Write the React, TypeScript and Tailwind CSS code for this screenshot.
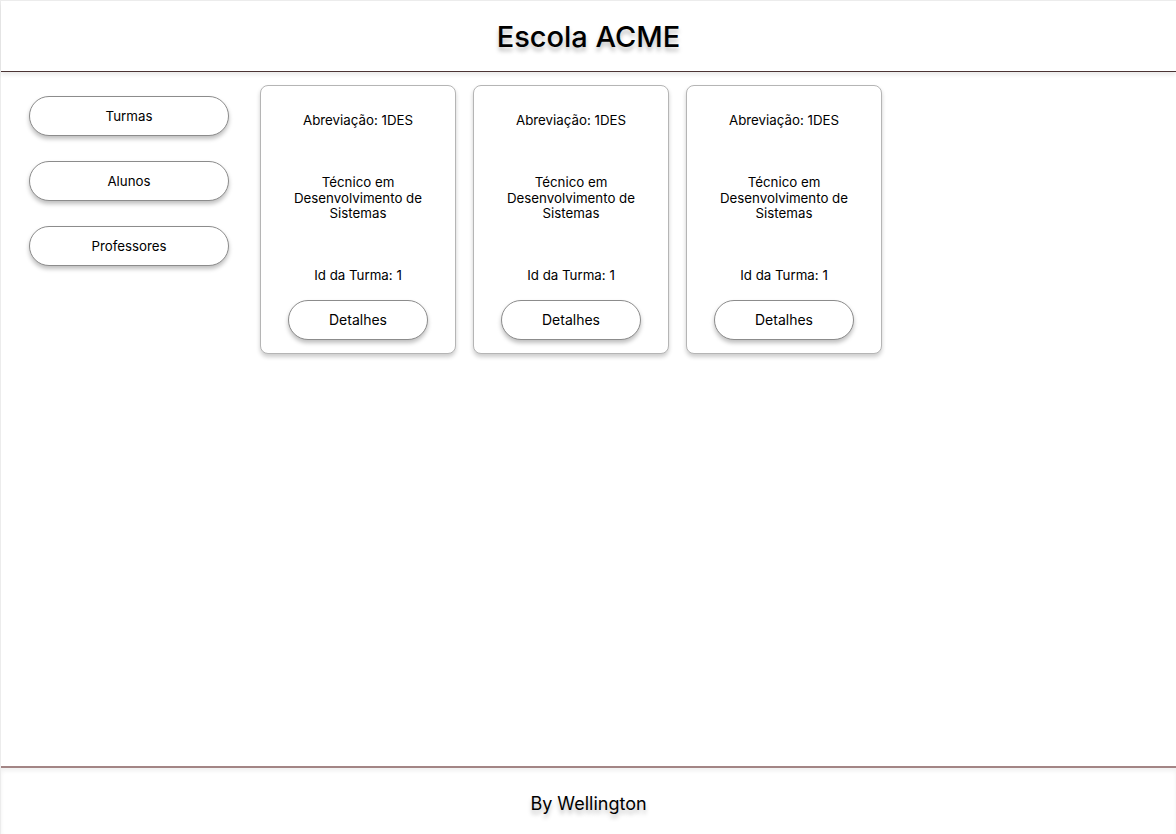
const turmas = [
  { id: 1, abreviacao: "1DES", nome: "Técnico em Desenvolvimento de Sistemas" },
  { id: 1, abreviacao: "1DES", nome: "Técnico em Desenvolvimento de Sistemas" },
  { id: 1, abreviacao: "1DES", nome: "Técnico em Desenvolvimento de Sistemas" },
];

const menu = ["Turmas", "Alunos", "Professores"];

export default function App() {
  return (
    <div className="h-[834px] flex flex-col bg-white border-l border-t border-[#ececec] text-black font-['Inter','Liberation_Sans',sans-serif]">
      {/* Header */}
      <header className="h-[71px] shrink-0 flex items-center justify-center border-b border-[#4b3434] shadow-[0_3px_4px_rgba(0,0,0,0.08)]">
        <h1 className="text-[29px] font-medium leading-none [text-shadow:0_4px_4px_rgba(0,0,0,0.25)]">
          Escola ACME
        </h1>
      </header>

      {/* Main */}
      <main className="flex-1 flex pl-[28px] pt-[13px]">
        <nav className="flex flex-col gap-[25px] pt-[11px] w-[200px]">
          {menu.map((m) => (
            <button
              key={m}
              className="h-[40px] w-[200px] rounded-full border border-[#8c8c8c] bg-white pt-[2px] text-[13.3px] shadow-[0_3px_4px_rgba(0,0,0,0.25)]"
            >
              {m}
            </button>
          ))}
        </nav>

        <section className="flex items-start gap-[17px] ml-[31px]">
          {turmas.map((t, i) => (
            <div
              key={i}
              className="w-[196px] h-[269px] flex flex-col items-center rounded-lg border border-[#b5b5b5] bg-white pt-[24px] shadow-[0_3px_4px_rgba(0,0,0,0.2)]"
            >
              <p className="text-[13.3px] leading-5">Abreviação: {t.abreviacao}</p>
              <p className="mt-[45px] w-[140px] text-center text-[13.3px] leading-[15.5px]">{t.nome}</p>
              <p className="mt-[43px] text-[13.3px] leading-5">Id da Turma: {t.id}</p>
              <button className="mt-[15px] h-[40px] w-[140px] rounded-full border border-[#8c8c8c] bg-white text-sm shadow-[0_3px_4px_rgba(0,0,0,0.25)]">
                Detalhes
              </button>
            </div>
          ))}
        </section>
      </main>

      {/* Footer */}
      <footer className="h-[68px] shrink-0 flex items-center justify-center pt-[6px] border-t-2 border-[#a38585] shadow-[inset_0_3px_4px_rgba(0,0,0,0.06)]">
        <p className="text-lg leading-none [text-shadow:0_4px_4px_rgba(0,0,0,0.25)]">By Wellington</p>
      </footer>
    </div>
  );
}
